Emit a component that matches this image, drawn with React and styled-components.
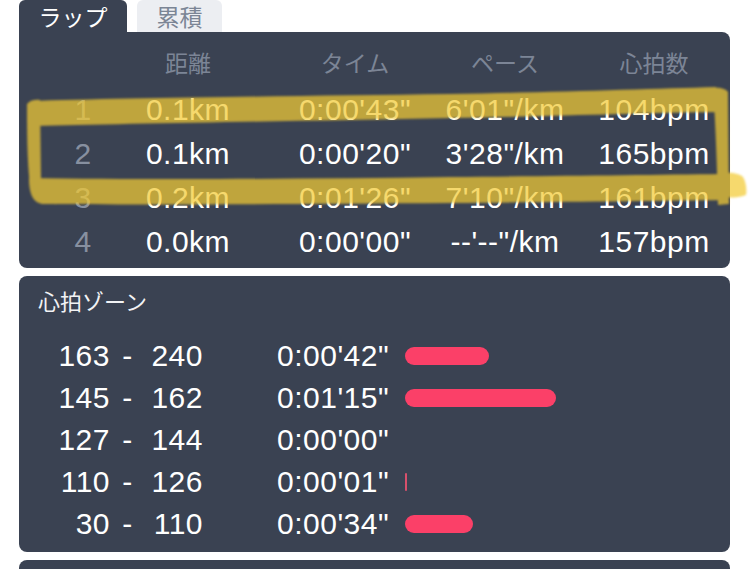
import React from 'react';
import styled, { createGlobalStyle } from 'styled-components';

const GlobalStyle = createGlobalStyle`
    html, body {
        margin: 0;
        padding: 0;
        background: #ffffff;
    }
    body {
        font-family: "Liberation Sans", "Noto Sans CJK JP", sans-serif;
        -webkit-font-smoothing: antialiased;
    }
`;

const laps = [
    { no: 1, dist: '0.1km', time: `0:00'43"`, pace: `6'01"/km`, hr: '104bpm' },
    { no: 2, dist: '0.1km', time: `0:00'20"`, pace: `3'28"/km`, hr: '165bpm' },
    { no: 3, dist: '0.2km', time: `0:01'26"`, pace: `7'10"/km`, hr: '161bpm' },
    { no: 4, dist: '0.0km', time: `0:00'00"`, pace: `--'--"/km`, hr: '157bpm' }
];

const zones = [
    { lo: 163, hi: 240, time: `0:00'42"`, sec: 42 },
    { lo: 145, hi: 162, time: `0:01'15"`, sec: 75 },
    { lo: 127, hi: 144, time: `0:00'00"`, sec: 0 },
    { lo: 110, hi: 126, time: `0:00'01"`, sec: 1 },
    { lo: 30, hi: 110, time: `0:00'34"`, sec: 34 }
];

const Page = styled.div`
    position: relative;
    width: 750px;
    height: 569px;
    overflow: hidden;
    box-sizing: border-box;
    padding: 0 20px 0 19px;
    display: flex;
    flex-direction: column;
    gap: 8px;
`;

const Tabs = styled.div`
    display: flex;
    gap: 10px;
    height: 32px;
    margin-bottom: -8px;
`;

const Tab = styled.div`
    width: ${props => (props.$active ? '108px' : '85px')};
    height: 32px;
    border-radius: 6px 6px 0 0;
    background: ${props => (props.$active ? '#3a4252' : '#eceef2')};
    color: ${props => (props.$active ? '#ffffff' : '#7b8595')};
    font-family: "Noto Sans CJK JP", sans-serif;
    font-size: 23px;
    line-height: 33px;
    text-align: center;
`;

const Panel = styled.div`
    background: #3a4252;
    border-radius: ${props => (props.$flatLeft ? '0 8px 8px 8px' : '8px')};
    color: #ffffff;
    flex-shrink: 0;
`;

const LapPanel = styled(Panel)`
    padding: 12px 0 4px 50px;
`;

const LapRow = styled.div`
    display: grid;
    grid-template-columns: 28px 182px 152px 148px 150px;
    height: 44px;
    line-height: 44px;
    font-size: 30px;
    letter-spacing: 0.5px;
    text-align: center;
    white-space: nowrap;
`;

const LapHead = styled(LapRow)`
    height: 36px;
    line-height: 36px;
    margin-bottom: 8px;
    font-family: "Noto Sans CJK JP", sans-serif;
    font-size: 23px;
    letter-spacing: 0;
    color: #7c8596;
`;

const LapNo = styled.span`
    color: #8790a0;
`;

const ZonePanel = styled(Panel)`
    padding: 10px 0 7px 19px;
`;

const ZoneTitle = styled.div`
    font-family: "Noto Sans CJK JP", sans-serif;
    font-size: 22px;
    line-height: 28px;
    color: #f2f3f5;
    margin-bottom: 21px;
`;

const ZoneRow = styled.div`
    display: grid;
    grid-template-columns: 72px 35px 58px 202px 1fr;
    align-items: center;
    height: 42px;
    line-height: 42px;
    font-size: 30px;
    letter-spacing: 0.5px;
    white-space: nowrap;
`;

const Num = styled.span`
    text-align: right;
`;

const Dash = styled.span`
    text-align: center;
`;

const ZoneTime = styled.span`
    padding-left: 74px;
`;

const Bar = styled.div`
    height: 18px;
    border-radius: 9px;
    background: ${props => (props.$thin ? '#d8506c' : '#fb4068')};
`;

const BottomPanel = styled(Panel)`
    height: 40px;
`;

const Marker = styled.svg`
    position: absolute;
    top: 0;
    left: 0;
    pointer-events: none;
`;

const HighlightMarker = () => (
    <Marker width="750" height="260" viewBox="0 0 750 260">
        <defs>
            <filter id="soft" x="-5%" y="-20%" width="110%" height="140%">
                <feGaussianBlur stdDeviation="0.9" />
            </filter>
        </defs>
        <g opacity="0.72" fill="#f3cb34" filter="url(#soft)">
            <path d="M30,101 C120,98 300,96 450,94 C560,92 650,89 716,87 L720,112 C640,113 560,116 450,118 C300,121 120,124 34,126 Z" />
            <path d="M27,104 C30,100 36,99 40,100 L41,180 L30,186 C27,160 27,130 27,104 Z" />
            <path d="M29,178 C150,180 300,179 450,177 C560,176 650,175 722,174 L724,200 C650,201 560,202 450,203 C300,204 150,205 42,204 C34,202 29,196 29,178 Z" />
            <path d="M713,88 C720,87 726,89 728,92 L729,204 L718,205 C717,170 716,130 713,88 Z" />
            <path d="M724,173 C732,172 740,174 743,177 C746,182 747,190 746,195 C738,198 730,198 724,197 Z" />
        </g>
    </Marker>
);

const App = () => {
    return (
        <>
            <GlobalStyle />
            <Page>
                <Tabs>
                    <Tab $active>ラップ</Tab>
                    <Tab>累積</Tab>
                </Tabs>
                <LapPanel $flatLeft>
                    <LapHead>
                        <span />
                        <span>距離</span>
                        <span>タイム</span>
                        <span>ペース</span>
                        <span>心拍数</span>
                    </LapHead>
                    {laps.map(lap => (
                        <LapRow key={lap.no}>
                            <LapNo>{lap.no}</LapNo>
                            <span>{lap.dist}</span>
                            <span>{lap.time}</span>
                            <span>{lap.pace}</span>
                            <span>{lap.hr}</span>
                        </LapRow>
                    ))}
                </LapPanel>
                <ZonePanel>
                    <ZoneTitle>心拍ゾーン</ZoneTitle>
                    {zones.map(zone => (
                        <ZoneRow key={zone.lo}>
                            <Num>{zone.lo}</Num>
                            <Dash>-</Dash>
                            <Num>{zone.hi}</Num>
                            <ZoneTime>{zone.time}</ZoneTime>
                            <div>
                                {zone.sec > 0 && (
                                    <Bar
                                        $thin={zone.sec < 2}
                                        style={{ width: Math.max(2, Math.round(zone.sec * 2.01)) }}
                                    />
                                )}
                            </div>
                        </ZoneRow>
                    ))}
                </ZonePanel>
                <BottomPanel />
                <HighlightMarker />
            </Page>
        </>
    );
};

export default App;
